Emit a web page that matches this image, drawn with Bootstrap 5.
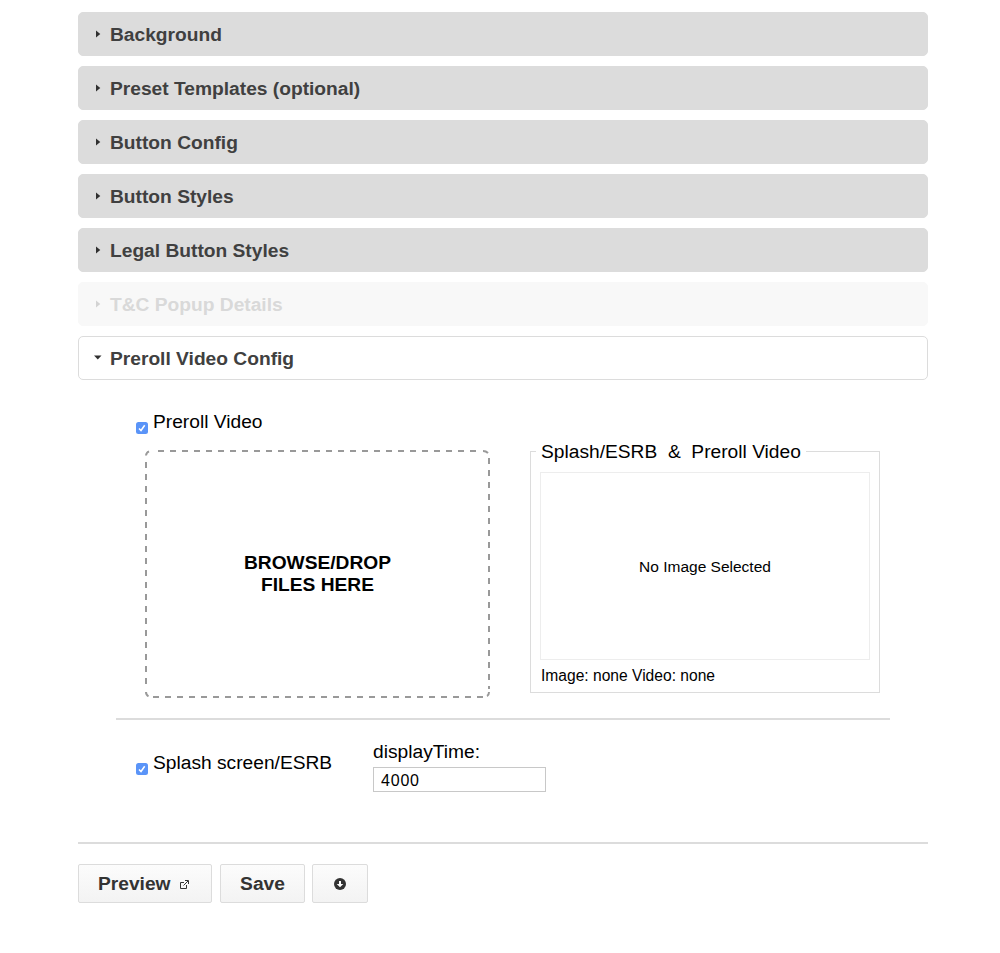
<!DOCTYPE html>
<html lang="en">
<head>
<meta charset="utf-8">
<meta name="viewport" content="width=device-width, initial-scale=1">
<title>Preroll Video Config</title>
<link rel="stylesheet" href="https://cdn.jsdelivr.net/npm/bootstrap@5.3.0/dist/css/bootstrap.min.css">
<style>
  body { font-family: "Liberation Sans", Arial, sans-serif; font-size: 19.2px; line-height: 22px; color: #000; background: #fff; }
  .page { width: 850px; margin-left: 78px; padding-top: 12px; }
  .sections { gap: 10px; }
  .section-head { height: 44px; margin: 0; padding: 1px 0 0 16px; border: 1px solid #dcdcdc; border-radius: 5px; background: #dcdcdc; color: #404040; font-size: 19.2px; font-weight: 700; line-height: 22px; text-align: left; }
  .section-head .t { padding-top: 1px; }
  .section-head svg { width: 8px; height: 8px; margin: 0 7px 2px 0; flex: none; fill: #303030; }
  .section-head.open { background: #fff; }
  .section-head:disabled { background: #f8f8f8; border-color: #f8f8f8; color: #d9d9d9; }
  .section-head:disabled svg { fill: #d3d3d3; }
  .panel { padding: 0 38px; }
  .tick[type=checkbox] { width: 12px; height: 12px; margin: 0 5px 0 0; border: 0; border-radius: 2.5px; flex: none; }
  .preroll-row .tick[type=checkbox] { margin-top: 11px; }
  .splash-row .tick[type=checkbox] { margin-top: 11px; }
  .tick:checked[type=checkbox] { background-color: #5a94f8; background-size: 12px 12px; background-image: url("data:image/svg+xml,%3csvg xmlns='http://www.w3.org/2000/svg' viewBox='0 0 12 12'%3e%3cpath fill='none' stroke='%23fff' stroke-width='1.5' d='M3 6.500l2 2L8.700 3.200'/%3e%3c/svg%3e"); }
  .preroll-row { padding: 31px 0 0 20px; }
  .upload-row { padding-top: 16px; }
  .dropzone { width: 345px; height: 248px; margin-left: 29px; }
  .dropzone svg { position: absolute; inset: 0; }
  .preview-set { width: 350px; height: 252.5px; margin: -10px 0 0 40px; padding: 0 9px; border: 1px solid #dcdcdc; }
  .preview-set legend { float: none; width: auto; height: 22px; margin: 0 0 10px -4px; padding: 0 5px; font-size: 19.2px; line-height: 24px; white-space: pre; }
  .preview-box { height: 188px; border: 1px solid #ededed; font-size: 15.5px; padding-top: 1px; }
  .note { font-size: 15.6px; line-height: 18px; padding: 7px 0 0 1px; }
  .rule { height: 2px; margin: 0; border: 0; background: #dcdcdc; opacity: 1; }
  .splash-row { padding: 21px 0 0 20px; height: 122px; }
  .splash-label { width: 237px; padding-top: 11px; }
  .time-field { width: 173px; height: 25px; padding: 2px 7px 0; border: 1px solid #c8c8c8; border-radius: 0; font-size: 16px; letter-spacing: .8px; line-height: 21px; color: #000; }
  .act { height: 39px; padding: 1px 0 0; border: 1px solid #dcdcdc; border-radius: 2px; color: #333; font-size: 19.2px; font-weight: 700; line-height: 22px; background: linear-gradient(#fcfcfc, #f3f3f3); }
  .t { white-space: nowrap; }
</style>
</head>
<body>
<main class="page">
  <div class="sections d-flex flex-column">
    <button class="section-head d-flex align-items-center"><svg viewBox="0 0 8 8"><path d="M1 .5L5.300 4 1 7.500z"/></svg><span class="t">Background</span></button>
    <button class="section-head d-flex align-items-center"><svg viewBox="0 0 8 8"><path d="M1 .5L5.300 4 1 7.500z"/></svg><span class="t">Preset Templates (optional)</span></button>
    <button class="section-head d-flex align-items-center"><svg viewBox="0 0 8 8"><path d="M1 .5L5.300 4 1 7.500z"/></svg><span class="t">Button Config</span></button>
    <button class="section-head d-flex align-items-center"><svg viewBox="0 0 8 8"><path d="M1 .5L5.300 4 1 7.500z"/></svg><span class="t">Button Styles</span></button>
    <button class="section-head d-flex align-items-center"><svg viewBox="0 0 8 8"><path d="M1 .5L5.300 4 1 7.500z"/></svg><span class="t">Legal Button Styles</span></button>
    <button class="section-head d-flex align-items-center" disabled><svg viewBox="0 0 8 8"><path d="M1 .5L5.300 4 1 7.500z"/></svg><span class="t">T&amp;C Popup Details</span></button>
    <button class="section-head open d-flex align-items-center"><svg viewBox="0 0 8 8" overflow="visible"><path d="M-1 1.500h7.500L2.750 5.500z"/></svg><span class="t">Preroll Video Config</span></button>
  </div>

  <div class="panel">
    <label class="preroll-row d-flex align-items-start"><input type="checkbox" class="form-check-input tick" checked><span class="t">Preroll Video</span></label>
    <div class="upload-row d-flex align-items-start">
      <div class="dropzone position-relative d-flex align-items-center justify-content-center text-center fw-bold">
        <svg width="345" height="248" fill="none" stroke="#999" stroke-width="2"><path d="M13 1H334" stroke-dasharray="6 6"/><path d="M8 247H340" stroke-dasharray="6 6"/><path d="M1 12V240M344 8V239" stroke-dasharray="6 6"/><path d="M1 5.500Q1.300 2.500 4 1.300M338 1Q341 1 343 3M1 242Q1 245 3.500 246.300M344 242Q344 245 342 246"/></svg>
        <div class="t">BROWSE/DROP<br>FILES HERE</div>
      </div>
      <fieldset class="preview-set">
        <legend>Splash/ESRB  &amp;  Preroll Video</legend>
        <div class="preview-box d-flex align-items-center justify-content-center"><span class="t">No Image Selected</span></div>
        <div class="note t">Image: none Video: none</div>
      </fieldset>
    </div>
    <hr class="rule" style="margin-top:20px">
    <div class="splash-row d-flex align-items-start">
      <label class="splash-label d-flex align-items-start"><input type="checkbox" class="form-check-input tick" checked><span class="t">Splash screen/ESRB</span></label>
      <div>
        <label class="d-block t" for="time" style="height:26px">displayTime:</label>
        <input id="time" class="form-control time-field" value="4000">
      </div>
    </div>
  </div>

  <hr class="rule">
  <div class="d-flex" style="padding-top:20px">
    <button class="act d-flex align-items-center" style="width:134px;padding-left:19px;margin-right:8px"><span class="t">Preview</span><svg width="9" height="9" style="margin:0 0 0 9px" fill="none" stroke="#333"><path d="M4 2.500H.5V8.500H6.500V5M3.500 5.500L8 1M5 .5H8.500V4"/></svg></button>
    <button class="act" style="width:85px;margin-right:7px">Save</button>
    <button class="act d-flex align-items-center justify-content-center" style="width:56px" aria-label="Download"><svg width="12" height="12"><circle cx="6" cy="6" r="6" fill="#333"/><path d="M5 3h2v3h2.300L6 9.300 2.700 6H5z" fill="#fff"/></svg></button>
  </div>
</main>
<script src="https://cdn.jsdelivr.net/npm/bootstrap@5.3.0/dist/js/bootstrap.bundle.min.js"></script>
</body>
</html>
